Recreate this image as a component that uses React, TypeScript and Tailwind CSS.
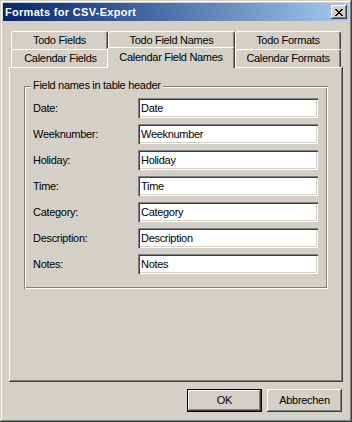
import React from 'react';

const fields = [
  ['Date:', 'Date'],
  ['Weeknumber:', 'Weeknumber'],
  ['Holiday:', 'Holiday'],
  ['Time:', 'Time'],
  ['Category:', 'Category'],
  ['Description:', 'Description'],
  ['Notes:', 'Notes'],
];

// Marlett-like close glyph, 8x7
const xRows = ['11000011', '01100110', '00111100', '00011000', '00111100', '01100110', '11000011'];

function CloseGlyph() {
  return (
    <svg width="8" height="7" viewBox="0 0 8 7" shapeRendering="crispEdges">
      {xRows.map((row, y) =>
        row.split('').map((c, x) => (c === '1' ? <rect key={`${x}-${y}`} x={x} y={y} width="1" height="1" fill="#000" /> : null))
      )}
    </svg>
  );
}

export default function App(): React.JSX.Element {
  return (
    <div className="w-[352px] h-[422px] bg-[#d4d0c8] p-[3px] flex flex-col font-['Liberation_Sans',Arial,sans-serif] text-[11px] tracking-[-0.3px] text-black shadow-[inset_-1px_-1px_#404040,inset_1px_1px_#d4d0c8,inset_-2px_-2px_#808080,inset_2px_2px_#ffffff]">
      {/* title bar */}
      <div className="h-[18px] flex items-center justify-between pl-[2px] pr-[2px] bg-gradient-to-r from-[#0a246a] to-[#a6caf0]">
        <span className="text-white font-bold text-[11px] tracking-[0.3px] leading-none">Formats for CSV-Export</span>
        <div className="w-[16px] h-[14px] bg-[#d4d0c8] pl-[4px] pt-[4px] shadow-[inset_-1px_-1px_#404040,inset_1px_1px_#ffffff,inset_-2px_-2px_#808080]">
          <CloseGlyph />
        </div>
      </div>

      <div className="flex flex-col px-[6px] pt-[10px]">
        {/* back tab row */}
        <div className="flex h-[18px] ml-[2px]">
          <div className="w-[97px] h-[18px] flex items-center justify-center border-l border-t border-white border-r border-r-[#404040] rounded-t-[3px] shadow-[inset_-1px_0_#808080]">
            Todo Fields
          </div>
          <div className="w-[127px] h-[18px] flex items-center justify-center border-l border-t border-white border-r border-r-[#404040] rounded-t-[3px] shadow-[inset_-1px_0_#808080]">
            Todo Field Names
          </div>
          <div className="w-[106px] h-[18px] flex items-center justify-center border-l border-t border-white border-r border-r-[#404040] rounded-t-[3px] shadow-[inset_-1px_0_#808080]">
            Todo Formats
          </div>
        </div>

        {/* front tab row */}
        <div className="flex items-end h-[18px] ml-[2px]">
          <div className="w-[98px] h-[18px] flex items-center justify-center border-l border-t border-white rounded-tl-[3px]">
            Calendar Fields
          </div>
          <div className="relative z-10 -ml-[2px] -mb-[1px] w-[128px] h-[21px] pb-[1px] bg-[#d4d0c8] flex items-center justify-center border-l border-t border-white border-r border-r-[#404040] rounded-t-[3px] shadow-[inset_-1px_0_#808080]">
            Calendar Field Names
          </div>
          <div className="w-[106px] h-[18px] flex items-center justify-center border-l border-t border-white border-r border-r-[#404040] rounded-t-[3px] shadow-[inset_-1px_0_#808080]">
            Calendar Formats
          </div>
        </div>

        {/* tab panel */}
        <div className="h-[315px] pt-[19px] pl-[15px] shadow-[inset_-1px_-1px_#404040,inset_1px_1px_#ffffff,inset_-2px_-2px_#808080]">
          <div className="relative w-[304px] h-[203px] pt-[12px] pl-[9px] flex flex-col gap-[6px] shadow-[inset_1px_1px_#808080,inset_-1px_-1px_#ffffff,inset_2px_2px_#ffffff,inset_-2px_-2px_#808080]">
            <span className="absolute left-[7px] -top-[7px] px-[2px] bg-[#d4d0c8] leading-[13px]">
              Field names in table header
            </span>
            {fields.map(([label, value]) => (
              <div key={label} className="flex items-center h-[20px]">
                <span className="w-[105px]">{label}</span>
                <input
                  readOnly
                  value={value}
                  className="w-[180px] h-[20px] bg-white pl-[3px] outline-none shadow-[inset_1px_1px_#808080,inset_2px_2px_#404040,inset_-1px_-1px_#ffffff,inset_-2px_-2px_#d4d0c8]"
                />
              </div>
            ))}
          </div>
        </div>

        {/* buttons */}
        <div className="flex justify-end gap-[5px] mt-[7px] pr-[1px]">
          <button className="w-[75px] h-[23px] border border-black bg-[#d4d0c8] shadow-[inset_-1px_-1px_#404040,inset_1px_1px_#ffffff,inset_-2px_-2px_#808080]">
            OK
          </button>
          <button className="w-[75px] h-[23px] bg-[#d4d0c8] shadow-[inset_-1px_-1px_#404040,inset_1px_1px_#ffffff,inset_-2px_-2px_#808080]">
            Abbrechen
          </button>
        </div>
      </div>
    </div>
  );
}
